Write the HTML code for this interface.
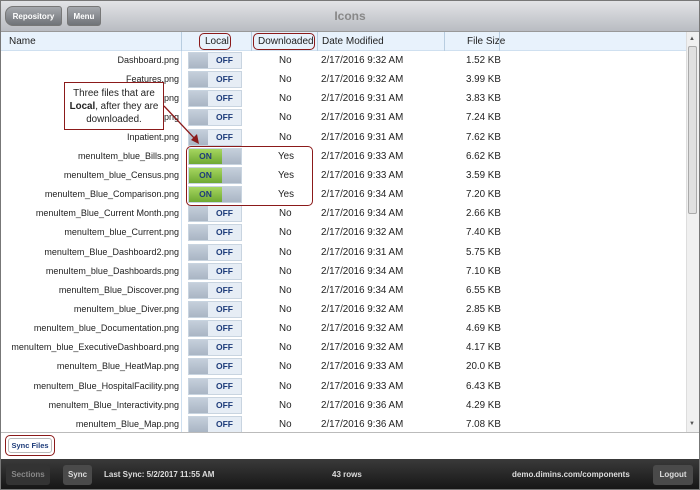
<!DOCTYPE html><html><head><style>
*{margin:0;padding:0;box-sizing:border-box}
body{width:700px;height:490px;overflow:hidden;font-family:"Liberation Sans",sans-serif;background:#fff;position:relative;font-size:9px;color:#222}
.top{position:absolute;left:0;top:0;width:700px;height:32px;background:linear-gradient(#e2e3e6,#b9bcc2);border:1px solid #777;border-bottom:1px solid #999}
.btn{position:absolute;top:6px;height:20px;background:linear-gradient(#a5a8ad,#6f7378);color:#fff;font-weight:bold;font-size:8px;line-height:20px;text-align:center;border-radius:3px;border:1px solid #777}
.title{position:absolute;left:0;width:700px;top:9px;text-align:center;color:#888;font-weight:bold;font-size:12px}
.hdr{position:absolute;left:1px;top:32px;width:685px;height:19px;background:#e8f2fc;border-bottom:1px solid #cfe0f0;font-size:10px;line-height:19px}
.hdr span{position:absolute;top:0}
.vl{position:absolute;top:0;height:19px;border-left:1px solid #b8cde0}
.row{position:absolute;left:1px;width:685px;height:19px;font-size:9.8px;line-height:19px}
.row span{position:absolute;top:0}
.row span.nm{font-size:9px;white-space:nowrap}
.tg{position:absolute;left:187px;top:1px;width:54px;height:17px;border:1px solid #c8d4e0;background:#e6edf5}
.tg .k{position:absolute;top:0;width:19px;height:15px;background:linear-gradient(#c5cfdb,#a9b5c4)}
.tg .l{position:absolute;top:0;height:15px;line-height:15px;font-weight:bold;font-size:8.5px;color:#1e3c7a;text-align:center}
.tg .k.on{background:linear-gradient(#a6d660,#6ea832)}
.red{position:absolute;border:1.5px solid #8b1a1a;border-radius:5px}
.foot{position:absolute;left:0;top:459px;width:700px;height:31px;background:linear-gradient(#3a3a3a,#151515);color:#ddd;font-weight:bold;font-size:8px}
.fb{position:absolute;top:6px;height:20px;line-height:20px;border-radius:3px;background:#4a4a4a;text-align:center}
</style></head><body>
<div class="top"></div>
<div class="btn" style="left:5px;width:57px;border-radius:8px 3px 3px 8px">Repository</div>
<div class="btn" style="left:67px;width:34px">Menu</div>
<div class="title">Icons</div>
<div class="hdr">
<span style="left:8px">Name</span>
<div class="vl" style="left:180px"></div><span style="left:204px">Local</span>
<div class="vl" style="left:250px"></div><span style="left:257px">Downloaded</span>
<div class="vl" style="left:316px"></div><span style="left:321px">Date Modified</span>
<div class="vl" style="left:443px"></div><span style="left:466px">File Size</span>
<div class="vl" style="left:498px"></div>
</div>
<div style="position:absolute;left:181px;top:51px;height:381px;border-left:1px solid #cfe0f0"></div>
<div id="rows"></div>
<div style="position:absolute;left:686px;top:32px;width:13px;height:400px;background:#f0f0f0;border-left:1px solid #ddd"></div>
<div style="position:absolute;left:688px;top:46px;width:9px;height:168px;background:#e0e0e0;border:1px solid #aaa;border-radius:2px"></div>
<div style="position:absolute;left:689px;top:36px;font-size:6px;color:#555">▲</div>
<div style="position:absolute;left:689px;top:421px;font-size:6px;color:#555">▼</div>
<div style="position:absolute;left:0;top:432px;width:700px;height:27px;border-top:1px solid #bbb;border-left:1px solid #777;border-right:1px solid #777"></div>
<div style="position:absolute;left:5px;top:435px;width:50px;height:21px;border:1.5px solid #8b1a1a;border-radius:5px"></div>
<div style="position:absolute;left:8px;top:438px;width:44px;height:15px;border:1px solid #bbb;border-radius:3px;font-size:7.5px;font-weight:bold;color:#1e3c7a;line-height:14px;text-align:center">Sync Files</div>
<div class="foot">
<div class="fb" style="left:6px;width:44px;color:#888;background:#333">Sections</div>
<div class="fb" style="left:63px;width:29px">Sync</div>
<span style="position:absolute;left:104px;top:11px">Last Sync: 5/2/2017 11:55 AM</span>
<span style="position:absolute;left:332px;top:11px">43 rows</span>
<span style="position:absolute;left:512px;top:11px">demo.dimins.com/components</span>
<div class="fb" style="left:653px;width:40px">Logout</div>
</div>
<div class="red" style="left:199px;top:33px;width:32px;height:17px"></div>
<div class="red" style="left:253px;top:33px;width:62px;height:17px"></div>
<div class="red" style="left:186px;top:146px;width:127px;height:60px"></div>
<div style="position:absolute;left:64px;top:82px;width:100px;height:48px;border:1.5px solid #8b1a1a;background:#fff;font-size:9.8px;line-height:13px;text-align:center;padding-top:4px">Three files that are <b>Local</b>, after they are downloaded.</div>
<svg style="position:absolute;left:0;top:0" width="700" height="490"><line x1="164" y1="106" x2="196" y2="140" stroke="#8b1a1a" stroke-width="1.3"/><path d="M199 144 L191 140 L197 134 Z" fill="#8b1a1a"/></svg>
<script>
var d=[["Dashboard.png",0,"2/17/2016 9:32 AM","1.52 KB"],["Features.png",0,"2/17/2016 9:32 AM","3.99 KB"],["Help.png",0,"2/17/2016 9:31 AM","3.83 KB"],["Home.png",0,"2/17/2016 9:31 AM","7.24 KB"],["Inpatient.png",0,"2/17/2016 9:31 AM","7.62 KB"],["menuItem_blue_Bills.png",1,"2/17/2016 9:33 AM","6.62 KB"],["menuItem_blue_Census.png",1,"2/17/2016 9:33 AM","3.59 KB"],["menuItem_Blue_Comparison.png",1,"2/17/2016 9:34 AM","7.20 KB"],["menuItem_Blue_Current Month.png",0,"2/17/2016 9:34 AM","2.66 KB"],["menuItem_blue_Current.png",0,"2/17/2016 9:32 AM","7.40 KB"],["menuItem_Blue_Dashboard2.png",0,"2/17/2016 9:31 AM","5.75 KB"],["menuItem_blue_Dashboards.png",0,"2/17/2016 9:34 AM","7.10 KB"],["menuItem_Blue_Discover.png",0,"2/17/2016 9:34 AM","6.55 KB"],["menuItem_blue_Diver.png",0,"2/17/2016 9:32 AM","2.85 KB"],["menuItem_blue_Documentation.png",0,"2/17/2016 9:32 AM","4.69 KB"],["menuItem_blue_ExecutiveDashboard.png",0,"2/17/2016 9:32 AM","4.17 KB"],["menuItem_Blue_HeatMap.png",0,"2/17/2016 9:33 AM","20.0 KB"],["menuItem_Blue_HospitalFacility.png",0,"2/17/2016 9:33 AM","6.43 KB"],["menuItem_Blue_Interactivity.png",0,"2/17/2016 9:36 AM","4.29 KB"],["menuItem_Blue_Map.png",0,"2/17/2016 9:36 AM","7.08 KB"]];
var h="";d.forEach(function(r,i){var t=51+i*19.15;
var tg=r[1]?'<div class="tg"><div class="k on" style="left:0;width:33px"></div><div class="l" style="left:0;width:33px">ON</div><div class="k" style="left:33px"></div></div>':'<div class="tg"><div class="k" style="left:0"></div><div class="l" style="left:19px;width:33px">OFF</div></div>';
h+='<div class="row" style="top:'+t+'px"><span class="nm" style="right:507px;text-align:right">'+r[0]+'</span>'+tg+'<span style="left:'+(r[1]?277:278)+'px">'+(r[1]?"Yes":"No")+'</span><span style="left:320px">'+r[2]+'</span><span style="left:465px">'+r[3]+'</span></div>';});
document.getElementById("rows").innerHTML=h;
</script>
<div style="position:absolute;left:0;top:0;width:700px;height:490px;border:1px solid #777;pointer-events:none"></div>
</body></html>
